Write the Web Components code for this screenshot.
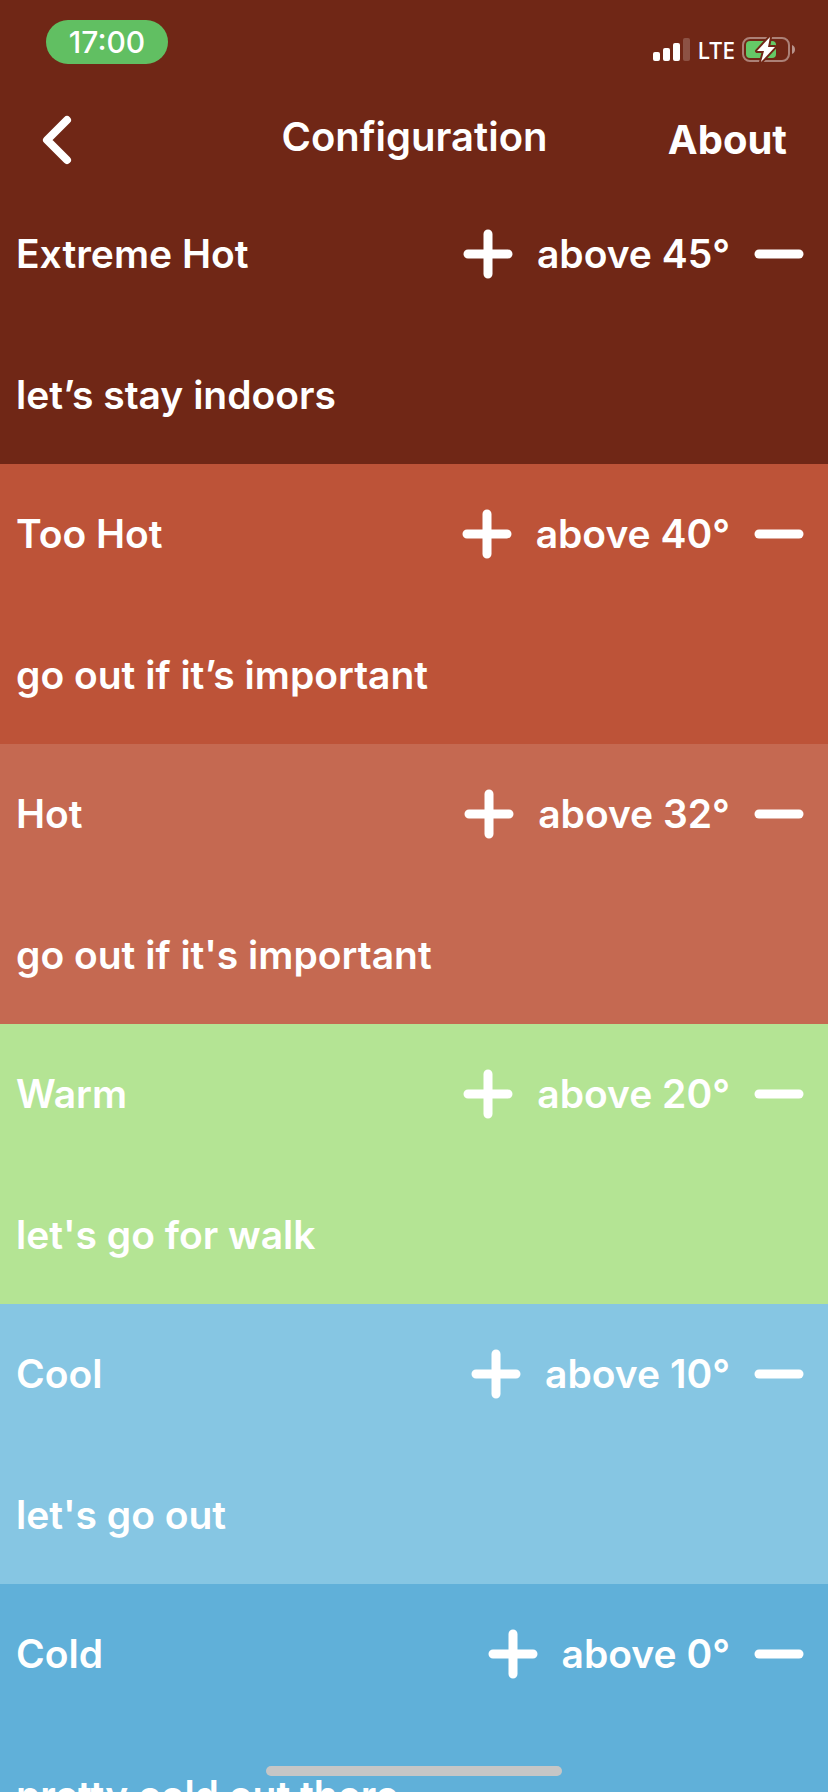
<!DOCTYPE html>
<html lang="en">
<head>
<meta charset="utf-8">
<meta name="viewport" content="width=device-width, initial-scale=1">
<title>Configuration</title>
<style>
  html, body { margin: 0; height: 100%; }
  body { font-family: Inter, "Liberation Sans", sans-serif; color: #fff; background: #702716; }
</style>
</head>
<body>
<config-app></config-app>
<script>
const define = (name, html, setup) => {
  const template = document.createElement('template');
  template.innerHTML = html;
  customElements.define(name, class extends HTMLElement {
    constructor() {
      super();
      this.attachShadow({ mode: 'open' }).append(template.content.cloneNode(true));
    }
    connectedCallback() { if (setup) setup(this, this.shadowRoot); }
  });
};

define('status-bar', `
  <style>
    :host { display: flex; justify-content: space-between; align-items: flex-start; padding: 20px 32px 0 46px; height: 80px; box-sizing: border-box; }
    .time { width: 122px; height: 44px; line-height: 44px; border-radius: 22px; background: #61bf62; text-align: center; font-size: 30px; font-weight: 500; }
    .status { display: flex; align-items: center; gap: 7px; height: 32px; padding-top: 14px; font-size: 23px; line-height: 32px; font-weight: 500; font-family: "Noto Sans", sans-serif; }
    svg { display: block; }
  </style>
  <div class="time">17:00</div>
  <div class="status">
    <svg width="37" height="24" viewBox="0 0 37 24" fill="#fff" aria-hidden="true">
      <rect x="0" y="14" width="7" height="9" rx="2"/><rect x="10" y="10" width="7" height="13" rx="2"/>
      <rect x="20" y="5" width="7" height="18" rx="2"/><rect x="30" y="0" width="7" height="23" rx="2" opacity=".2"/>
    </svg>
    <span>LTE</span>
    <svg width="54" height="28" viewBox="0 0 54 28" aria-hidden="true">
      <rect x="1" y="2" width="46" height="23" rx="7" fill="none" stroke="#fff" stroke-opacity=".42" stroke-width="2"/>
      <path d="M50 9c4 1 4 8 0 9z" fill="#fff" fill-opacity=".5"/>
      <rect x="4" y="5" width="30" height="17" rx="4" fill="#65c966"/>
      <path d="M28 1 15 15h7l-3 11 14-15h-7z" fill="#fff" stroke="#702716" stroke-width="4" stroke-linejoin="round" paint-order="stroke"/>
    </svg>
  </div>`);

define('nav-bar', `
  <style>
    :host { display: grid; grid-template-columns: 1fr auto 1fr; align-items: center; height: 104px; box-sizing: border-box; padding: 10px 41px 0 42px; }
    button { all: unset; cursor: pointer; display: block; padding-top: 6px; }
    a { justify-self: end; color: inherit; text-decoration: none; font-size: 40px; line-height: 48px; font-weight: 700; padding-top: 6px; }
    h1 { margin: 0; font-size: 40px; line-height: 48px; font-weight: 600; }
    svg { display: block; }
  </style>
  <button aria-label="Back">
    <svg width="30" height="50" viewBox="0 0 30 50" fill="none" stroke="#fff" stroke-width="8" stroke-linecap="round" stroke-linejoin="round"><path d="M25 5 5 25 25 45"/></svg>
  </button>
  <h1><slot></slot></h1>
  <a href="#about">About</a>`);

define('temp-row', `
  <style>
    :host { display: flex; flex-direction: column; flex: none; height: 280px; box-sizing: border-box; padding: 45px 24px 0 16px; font-size: 39px; line-height: 48px; font-weight: 600; }
    .top { display: flex; align-items: center; gap: 24px; }
    h2, p { margin: 0; font: inherit; }
    h2 { flex: 1; }
    p { padding-top: 92px; }
    button { all: unset; cursor: pointer; display: block; }
    svg { display: block; }
  </style>
  <div class="top">
    <h2></h2>
    <button aria-label="Increase"><svg width="50" height="50" viewBox="0 0 50 50" stroke="#fff" stroke-width="9" stroke-linecap="round"><path d="M5 25H45M25 5V45"/></svg></button>
    <span class="limit"></span>
    <button aria-label="Decrease"><svg width="50" height="50" viewBox="0 0 50 50" stroke="#fff" stroke-width="9" stroke-linecap="round"><path d="M5 25H45"/></svg></button>
  </div>
  <p><slot></slot></p>`, (host, root) => {
    root.querySelector('h2').textContent = host.getAttribute('label');
    root.querySelector('.limit').textContent = 'above ' + host.getAttribute('degrees') + '°';
    host.style.background = host.getAttribute('color');
  });

define('config-app', `
  <style>
    :host { display: flex; flex-direction: column; height: 100vh; overflow: hidden; }
    main { display: flex; flex-direction: column; flex: 1; min-height: 0; overflow-y: auto; scrollbar-width: none; }
    .home { position: fixed; bottom: 16px; left: 50%; width: 296px; height: 10px; margin-left: -148px; border-radius: 5px; background: #c6c6c6; }
  </style>
  <status-bar></status-bar>
  <nav-bar>Configuration</nav-bar>
  <main>
    <temp-row label="Extreme Hot" degrees="45" color="#702716">let’s stay indoors</temp-row>
    <temp-row label="Too Hot" degrees="40" color="#bd5338">go out if it’s important</temp-row>
    <temp-row label="Hot" degrees="32" color="#c56951">go out if it's important</temp-row>
    <temp-row label="Warm" degrees="20" color="#b4e494">let's go for walk</temp-row>
    <temp-row label="Cool" degrees="10" color="#86c6e3">let's go out</temp-row>
    <temp-row label="Cold" degrees="0" color="#60b0d9">pretty cold out there</temp-row>
  </main>
  <div class="home"></div>`);
</script>
</body>
</html>
